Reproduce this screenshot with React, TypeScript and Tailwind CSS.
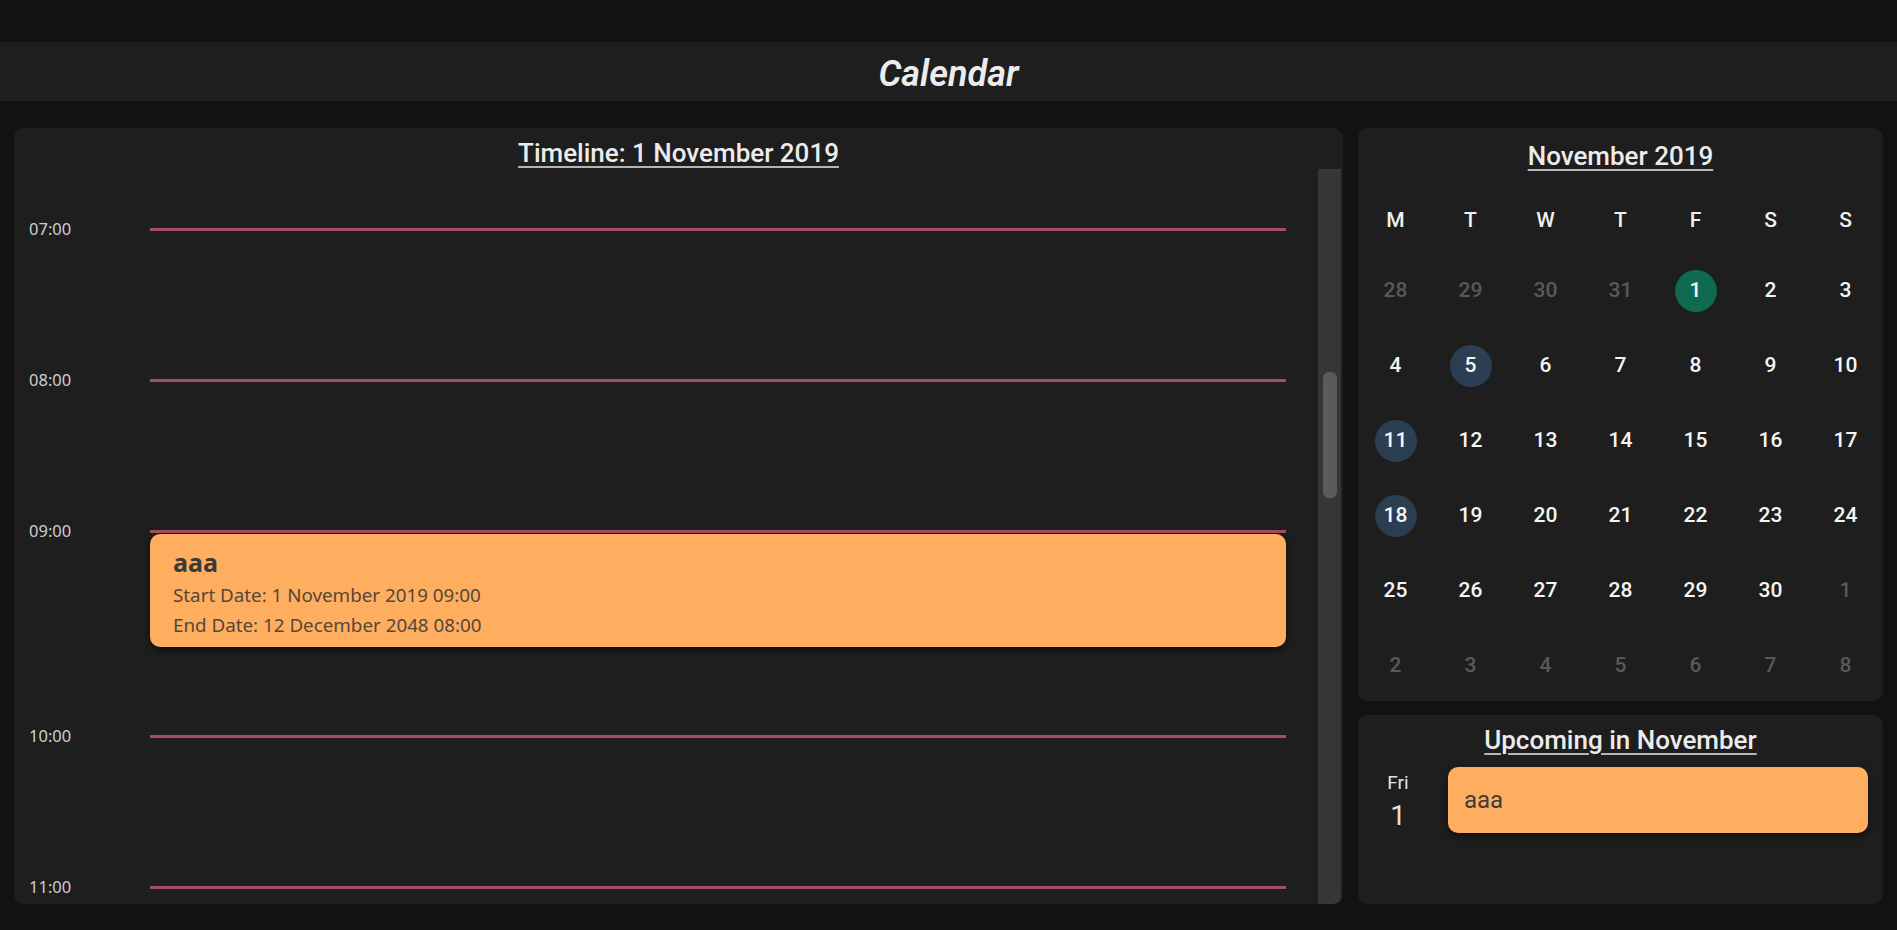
import React from "react";

type DayCell = { n: number; muted?: boolean; mark?: "today" | "event" };

const weekdays = ["M", "T", "W", "T", "F", "S", "S"];

const days: DayCell[] = [
  { n: 28, muted: true }, { n: 29, muted: true }, { n: 30, muted: true }, { n: 31, muted: true },
  { n: 1, mark: "today" }, { n: 2 }, { n: 3 },
  { n: 4 }, { n: 5, mark: "event" }, { n: 6 }, { n: 7 }, { n: 8 }, { n: 9 }, { n: 10 },
  { n: 11, mark: "event" }, { n: 12 }, { n: 13 }, { n: 14 }, { n: 15 }, { n: 16 }, { n: 17 },
  { n: 18, mark: "event" }, { n: 19 }, { n: 20 }, { n: 21 }, { n: 22 }, { n: 23 }, { n: 24 },
  { n: 25 }, { n: 26 }, { n: 27 }, { n: 28 }, { n: 29 }, { n: 30 }, { n: 1, muted: true },
  { n: 2, muted: true }, { n: 3, muted: true }, { n: 4, muted: true }, { n: 5, muted: true },
  { n: 6, muted: true }, { n: 7, muted: true }, { n: 8, muted: true },
];

const hours = ["07:00", "08:00", "09:00", "10:00", "11:00"];

const EventCard = () => (
  <div className="mt-[1px] mb-[87px] rounded-[10px] bg-[#ffae5f] pl-[23px] pt-[12px] pb-[7px] shadow-[0_3px_6px_rgba(0,0,0,0.55)] font-['Noto_Sans',sans-serif]">
    <div className="text-[25px] leading-[32px] font-bold text-[#3a3a3a]">aaa</div>
    <div className="mt-[2px] text-[18.8px] leading-[30px] text-[#55473a]">Start Date: 1 November 2019 09:00</div>
    <div className="text-[18.8px] leading-[30px] text-[#55473a]">End Date: 12 December 2048 08:00</div>
  </div>
);

const Timeline = () => (
  <section className="flex-1 flex flex-col rounded-[10px] bg-[#1e1e1e] overflow-hidden">
    <h2 className="pt-[9px] text-center text-[26px] leading-[32px] font-medium text-[#ececec] underline decoration-[#b5b5b5] decoration-2 underline-offset-[4px]">
      Timeline: 1 November 2019
    </h2>
    <div className="flex flex-1 min-h-0">
      <div className="flex-1 overflow-hidden pt-[58px] pl-[15px] pr-[32px]">
        {hours.map((h) => (
          <div key={h} className="flex flex-col min-h-[151px]">
            <div className="flex items-center h-[4px]">
              <span className="w-[121px] shrink-0 text-[16.5px] leading-none text-[#cfcfcf] font-['Noto_Sans',sans-serif]">{h}</span>
              <div className="flex-1 h-[3px] bg-[#a24d62]" />
            </div>
            {h === "09:00" && (
              <div className="ml-[121px]">
                <EventCard />
              </div>
            )}
          </div>
        ))}
      </div>
      <div className="w-[23px] mr-[2px] bg-[#363636] flex justify-center">
        <div className="mt-[203px] w-[14px] h-[126px] rounded-[6px] bg-[#5b5b5b]" />
      </div>
    </div>
  </section>
);

const MonthView = () => (
  <section className="rounded-[10px] bg-[#1e1e1e] pt-[12px] pb-[14px]">
    <h2 className="text-center text-[26px] leading-[32px] font-medium text-[#ececec] underline decoration-[#b5b5b5] decoration-2 underline-offset-[4px]">
      November 2019
    </h2>
    <div className="mt-[29px] grid grid-cols-7 h-[40px] items-center">
      {weekdays.map((d, i) => (
        <div key={i} className="text-center text-[21px] font-medium text-[#f0f0f0]">{d}</div>
      ))}
    </div>
    <div className="mt-[29px] grid grid-cols-7 gap-y-[33px]">
      {days.map((d, i) => (
        <div key={i} className="flex justify-center">
          <div
            className={
              "w-[42px] h-[42px] rounded-full flex items-center justify-center text-[21px] font-medium " +
              (d.muted ? "text-[#595959] " : "text-[#f5f5f5] ") +
              (d.mark === "today" ? "bg-[#0e6b50]" : d.mark === "event" ? "bg-[#2c3e52]" : "")
            }
          >
            {d.n}
          </div>
        </div>
      ))}
    </div>
  </section>
);

const Upcoming = () => (
  <section className="flex-1 rounded-[10px] bg-[#1e1e1e] pt-[9px]">
    <h2 className="text-center text-[26px] leading-[32px] font-medium text-[#ececec] underline decoration-[#b5b5b5] decoration-2 underline-offset-[4px]">
      Upcoming in November
    </h2>
    <div className="mt-[11px] flex pr-[15px]">
      <div className="w-[80px] shrink-0 flex flex-col items-center pt-[5px] text-[#e2e2e2]">
        <span className="text-[19px] leading-[22px]">Fri</span>
        <span className="mt-[6px] text-[28px] leading-[32px]">1</span>
      </div>
      <div className="ml-[10px] flex-1 h-[66px] flex items-center pl-[16px] rounded-[10px] bg-[#ffae5f] shadow-[0_3px_6px_rgba(0,0,0,0.5)] text-[24px] text-[#3d3d3d]">
        aaa
      </div>
    </div>
  </section>
);

export default function App() {
  return (
    <div className="w-full h-[930px] bg-[#121212] flex flex-col font-['Roboto',sans-serif] overflow-hidden">
      <header className="mt-[42px] h-[59px] bg-[#1e1e1e] flex items-center justify-center pt-[4px]">
        <h1 className="text-[36px] leading-[42px] font-semibold italic text-[#ececec]">Calendar</h1>
      </header>
      <main className="flex-1 min-h-0 flex gap-[15px] px-[14px] pt-[27px] pb-[26px]">
        <Timeline />
        <div className="w-[525px] shrink-0 flex flex-col gap-[14px]">
          <MonthView />
          <Upcoming />
        </div>
      </main>
    </div>
  );
}
